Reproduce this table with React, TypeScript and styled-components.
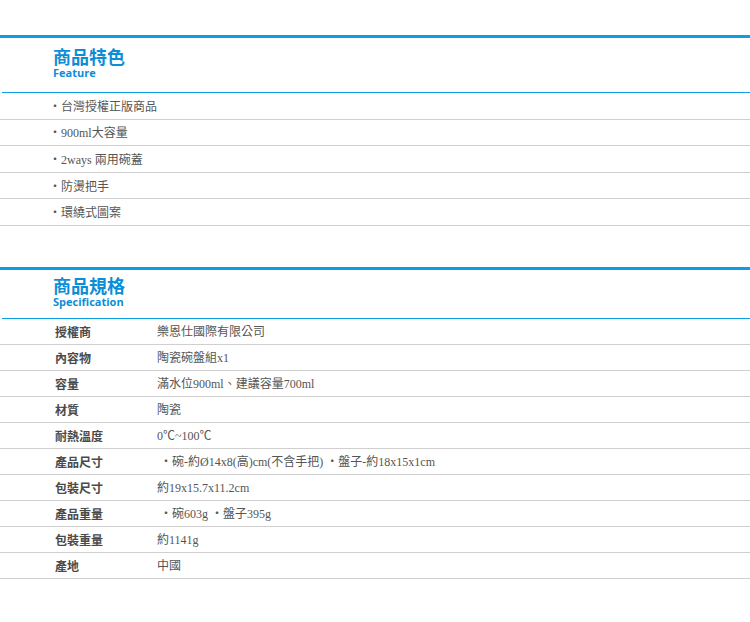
import React from "react";
import styled, { createGlobalStyle } from "styled-components";

const Global = createGlobalStyle`
  html, body { margin: 0; padding: 0; background: #fff; }
  body { font-family: "Liberation Serif", "Noto Sans CJK TC", serif; }
`;

const Page = styled.div`
  width: 750px;
  padding-top: 35px;
  display: flex;
  flex-direction: column;
  gap: 41px;
`;

const Section = styled.section`
  border-top: 3px solid #0a9fe3;
`;

const Heading = styled.div<{ $pt: number; $pb: number }>`
  padding: ${(p) => p.$pt}px 0 ${(p) => p.$pb}px 51px;
  border-bottom: 1px solid #0a9fe3;
  margin-left: 2px;
  display: flex;
  flex-direction: column;
  gap: 1px;
`;

const Title = styled.div`
  font-family: "Noto Sans CJK TC", sans-serif;
  font-weight: 700;
  font-size: 18px;
  line-height: 18px;
  height: 18px;
  color: #0b8ed6;
`;

const Sub = styled.div`
  font-family: "Open Sans", "Liberation Sans", sans-serif;
  font-weight: 700;
  font-size: 11px;
  line-height: 14px;
  height: 14px;
  color: #0b8ed6;
`;

const List = styled.ul`
  list-style: none;
  margin: 0;
  padding: 0;
`;

const Item = styled.li`
  height: 25.6px;
  border-bottom: 1px solid #cfcfcf;
  display: flex;
  align-items: center;
  padding-left: 49px;
  font-size: 12px;
  color: #555;
  font-family: "Liberation Serif", "Noto Sans CJK TC", serif;
`;

const Row = styled.div`
  height: 25px;
  border-bottom: 1px solid #cfcfcf;
  display: flex;
  align-items: center;
  padding-left: 55px;
`;

const Label = styled.div`
  width: 102px;
  flex-shrink: 0;
  font-family: "Noto Sans CJK TC", sans-serif;
  font-weight: 700;
  font-size: 12px;
  color: #4a4a4a;
`;

const Value = styled.div`
  font-family: "Liberation Serif", "Noto Sans CJK TC", serif;
  font-size: 12px;
  color: #555;
  white-space: pre;
`;

const features = ["台灣授權正版商品", "900ml大容量", "2ways 兩用碗蓋", "防燙把手", "環繞式圖案"];

const specs: [string, string][] = [
  ["授權商", "樂恩仕國際有限公司"],
  ["內容物", "陶瓷碗盤組x1"],
  ["容量", "滿水位900ml、建議容量700ml"],
  ["材質", "陶瓷"],
  ["耐熱溫度", "0℃~100℃"],
  ["產品尺寸", " ・碗-約Ø14x8(高)cm(不含手把) ・盤子-約18x15x1cm"],
  ["包裝尺寸", "約19x15.7x11.2cm"],
  ["產品重量", " ・碗603g ・盤子395g"],
  ["包裝重量", "約1141g"],
  ["產地", "中國"],
];

export default function App() {
  return (
    <>
      <Global />
      <Page>
        <Section>
          <Heading $pt={9} $pb={12}>
            <Title>商品特色</Title>
            <Sub>Feature</Sub>
          </Heading>
          <List>
            {features.map((f) => (
              <Item key={f}>・{f}</Item>
            ))}
          </List>
        </Section>
        <Section>
          <Heading $pt={6} $pb={9}>
            <Title>商品規格</Title>
            <Sub>Specification</Sub>
          </Heading>
          {specs.map(([k, v]) => (
            <Row key={k}>
              <Label>{k}</Label>
              <Value>{v}</Value>
            </Row>
          ))}
        </Section>
      </Page>
    </>
  );
}
